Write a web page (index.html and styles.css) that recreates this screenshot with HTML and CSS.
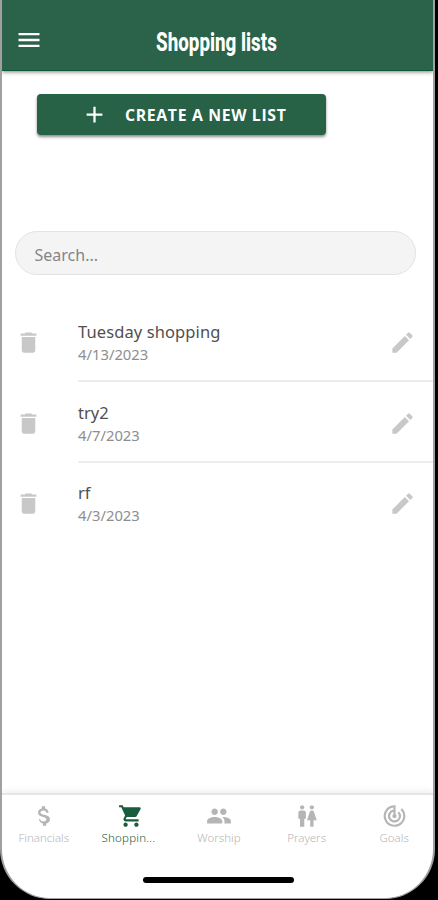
FILE: index.html
```html
<!DOCTYPE html>
<html lang="en">
<head>
<meta charset="utf-8">
<title>Shopping lists</title>
<link rel="stylesheet" href="styles.css">
</head>
<body>
<div class="phone">
  <header class="header">
    <svg class="menu" viewBox="0 0 24 24"><path d="M3 18h18v-2H3v2zm0-5h18v-2H3v2zm0-7v2h18V6H3z"/></svg>
    <h1 class="title"><span>Shopping lists</span></h1>
  </header>
  <main class="main">
    <button class="create">
      <svg viewBox="0 0 24 24"><path d="M19 13h-6v6h-2v-6H5v-2h6V5h2v6h6v2z"/></svg>
      <span>CREATE A NEW LIST</span>
    </button>
    <input class="search" type="text" placeholder="Search..." aria-label="Search">
    <ul class="list">
      <li class="row">
        <svg class="icon" viewBox="0 0 24 24"><path d="M6 19c0 1.100.900 2 2 2h8c1.100 0 2-.900 2-2V7H6v12zM19 4h-3.500l-1-1h-5l-1 1H5v2h14V4z"/></svg>
        <div class="body"><div class="text"><p class="name n1">Tuesday shopping</p><p class="date">4/13/2023</p></div>
        <svg class="icon" viewBox="0 0 24 24"><path d="M3 17.250V21h3.750L17.810 9.940l-3.750-3.750L3 17.250zM20.710 7.040a1 1 0 0 0 0-1.410l-2.340-2.340a1 1 0 0 0-1.410 0l-1.830 1.830 3.750 3.750 1.830-1.830z"/></svg></div>
      </li>
      <li class="row">
        <svg class="icon" viewBox="0 0 24 24"><path d="M6 19c0 1.100.900 2 2 2h8c1.100 0 2-.900 2-2V7H6v12zM19 4h-3.500l-1-1h-5l-1 1H5v2h14V4z"/></svg>
        <div class="body"><div class="text"><p class="name">try2</p><p class="date">4/7/2023</p></div>
        <svg class="icon" viewBox="0 0 24 24"><path d="M3 17.250V21h3.750L17.810 9.940l-3.750-3.750L3 17.250zM20.710 7.040a1 1 0 0 0 0-1.410l-2.340-2.340a1 1 0 0 0-1.410 0l-1.830 1.830 3.750 3.750 1.830-1.830z"/></svg></div>
      </li>
      <li class="row">
        <svg class="icon" viewBox="0 0 24 24"><path d="M6 19c0 1.100.900 2 2 2h8c1.100 0 2-.900 2-2V7H6v12zM19 4h-3.500l-1-1h-5l-1 1H5v2h14V4z"/></svg>
        <div class="body"><div class="text"><p class="name">rf</p><p class="date">4/3/2023</p></div>
        <svg class="icon" viewBox="0 0 24 24"><path d="M3 17.250V21h3.750L17.810 9.940l-3.750-3.750L3 17.250zM20.710 7.040a1 1 0 0 0 0-1.410l-2.340-2.340a1 1 0 0 0-1.410 0l-1.830 1.830 3.750 3.750 1.830-1.830z"/></svg></div>
      </li>
    </ul>
  </main>
  <footer class="footer">
    <nav class="tabs">
      <a class="tab"><svg viewBox="0 0 24 24"><path d="M11.800 10.900c-2.270-.590-3-1.200-3-2.150 0-1.090 1.010-1.850 2.700-1.850 1.780 0 2.440.850 2.500 2.100h2.210c-.070-1.720-1.120-3.300-3.210-3.810V3h-3v2.160c-1.940.420-3.500 1.680-3.500 3.610 0 2.310 1.910 3.460 4.700 4.130 2.500.600 3 1.480 3 2.410 0 .690-.490 1.790-2.700 1.790-2.060 0-2.870-.920-2.980-2.100H7.320c.120 2.190 1.760 3.420 3.680 3.830V21h3v-2.150c1.950-.370 3.500-1.500 3.500-3.550 0-2.840-2.430-3.810-5.700-4.400z"/></svg><span>Financials</span></a>
      <a class="tab active"><svg viewBox="0 0 24 24"><path d="M7 18c-1.100 0-1.990.900-1.990 2S5.900 22 7 22s2-.900 2-2-.900-2-2-2zM1 2v2h2l3.600 7.590-1.350 2.450c-.160.280-.250.610-.250.960 0 1.100.900 2 2 2h12v-2H7.420c-.140 0-.250-.110-.250-.250l.030-.120.900-1.630h7.450c.750 0 1.410-.410 1.750-1.030l3.580-6.490A1 1 0 0 0 20.010 4H5.210l-.940-2H1zm16 16c-1.100 0-1.990.900-1.990 2s.890 2 1.990 2 2-.900 2-2-.900-2-2-2z"/></svg><span>Shoppin...</span></a>
      <a class="tab"><svg viewBox="0 0 24 24"><path d="M16 11c1.660 0 2.990-1.340 2.990-3S17.660 5 16 5s-3 1.340-3 3 1.340 3 3 3zm-8 0c1.660 0 2.990-1.340 2.990-3S9.660 5 8 5 5 6.340 5 8s1.340 3 3 3zm0 2c-2.330 0-7 1.170-7 3.500V19h14v-2.500C15 14.170 10.330 13 8 13zm8 0c-.290 0-.620.020-.970.050 1.160.840 1.970 1.970 1.970 3.450V19h6v-2.500c0-2.330-4.670-3.500-7-3.500z"/></svg><span>Worship</span></a>
      <a class="tab"><svg viewBox="0 0 24 24"><path d="M5.500 22v-7.500H4V9c0-1.100.900-2 2-2h3c1.100 0 2 .900 2 2v5.500H9.500V22h-4zM18 22v-6h3l-2.540-7.630A2 2 0 0 0 16.560 7h-.120a2 2 0 0 0-1.900 1.370L12 16h3v6h3zM7.500 6c1.110 0 2-.890 2-2s-.890-2-2-2-2 .890-2 2 .890 2 2 2zm9 0c1.110 0 2-.890 2-2s-.890-2-2-2-2 .890-2 2 .890 2 2 2z"/></svg><span>Prayers</span></a>
      <a class="tab"><svg viewBox="0 0 24 24"><path d="M19.070 4.930l-1.410 1.410A8 8 0 1 1 11 4.070v2.020A6 6 0 1 0 16.240 7.760l-1.410 1.410A4 4 0 1 1 11 8.140v2.140c-.600.350-1 .980-1 1.720 0 1.100.900 2 2 2s2-.900 2-2c0-.740-.400-1.380-1-1.720V2h-1a10 10 0 1 0 7.070 2.930z"/></svg><span>Goals</span></a>
    </nav>
    <div class="home"></div>
  </footer>
</div>
</body>
</html>
```
FILE: styles.css
```css
* { box-sizing: border-box; margin: 0; padding: 0; }
body { width: 438px; height: 900px; background: #000; overflow: hidden; font-family: "Noto Sans", sans-serif; }
svg { display: block; flex: none; fill: currentColor; }
.phone { width: 435px; height: 899px; display: flex; flex-direction: column; background: #fff; border: solid #a0a0a0; border-width: 0 2px 1px; border-radius: 0 0 50px 50px; overflow: hidden; }
.header { height: 71px; width: 431px; flex: none; display: flex; align-items: center; padding: 9px 0 0 12px; background: #2a6349; border-bottom: 1px solid #125638; box-shadow: 0 1px 4px rgba(0,0,0,.5); color: #fff; }
.menu { width: 28px; height: 28px; margin-left: 1px; }
.title { flex: 1; padding: 6px 43px 0 0; text-align: center; font: 800 25px/28px Roboto, sans-serif; }
.title span { display: inline-block; transform: scaleX(.75); }
.main { flex: 1; display: flex; flex-direction: column; align-items: flex-start; padding-top: 23px; }
.create { width: 289px; height: 41px; margin-left: 35px; padding-left: 44px; display: flex; align-items: center; gap: 17px; border: 0; border-radius: 4px; background: #276146; box-shadow: 0 2px 3px rgba(0,0,0,.45); color: #fff; font: 700 15.8px/20px "Open Sans", sans-serif; letter-spacing: .65px; white-space: nowrap; }
.create svg { width: 27px; height: 27px; }
.create span { padding-top: 1px; }
.search { width: 401px; height: 44px; margin: 96px 0 0 13px; padding: 3px 19px 0 18.5px; border: 1.5px solid #e3e3e3; border-radius: 22px; background: #f4f4f4; font: 16px/22px "Noto Sans", sans-serif; }
.search::placeholder { color: #858585; opacity: 1; }
.list { width: 100%; margin-top: 26px; list-style: none; }
.row { display: flex; align-items: center; padding-left: 13px; color: #c8c8c8; }
.icon { width: 27px; height: 27px; }
.row > .icon { margin-top: 2px; }
.body { flex: 1; height: 81px; margin-left: 36px; display: flex; align-items: center; justify-content: space-between; padding: 4px 17px 0 0; border-bottom: 2px solid #ededed; }
.row + .row .body { padding-top: 3px; }
.row:last-child .body { height: 79px; border-color: transparent; }
.name { font-size: 16.5px; line-height: 24px; color: #505050; }
.n1 { letter-spacing: .1px; }
.date { margin-top: -1px; font-size: 14.8px; line-height: 22px; color: #8e8e8e; }
.footer { height: 105px; flex: none; border-top: 2px solid #e6e6e6; box-shadow: 0 -2px 6px rgba(0,0,0,.07); }
.tabs { width: 438px; margin-left: -2px; display: grid; grid-template-columns: repeat(5, 1fr); padding-top: 8px; }
.tab { display: flex; flex-direction: column; align-items: center; color: #b5b5b5; font: 300 11.5px/18px "Noto Sans", sans-serif; }
.tab svg { width: 26px; height: 26px; }
.tab:last-child svg { width: 27px; }
.active { color: #195c3e; }
.active span { margin-right: 6px; letter-spacing: .2px; }
.home { width: 151px; height: 6px; margin: 30px 0 0 141px; border-radius: 3px; background: #000; }
```
